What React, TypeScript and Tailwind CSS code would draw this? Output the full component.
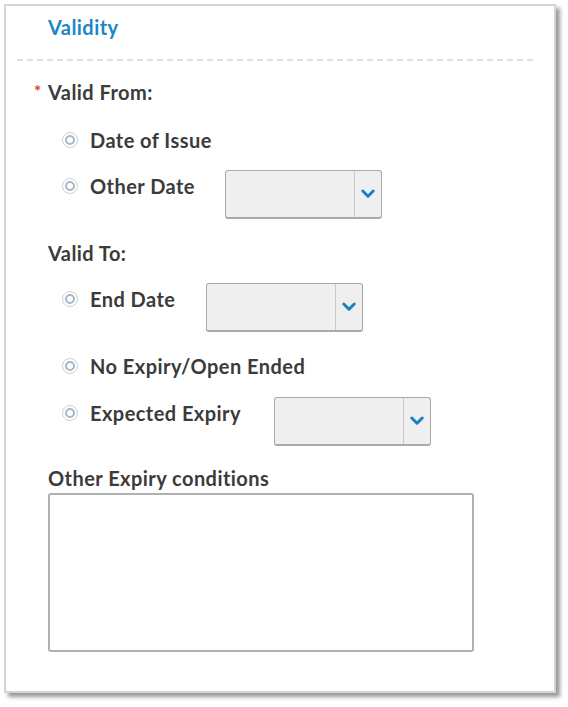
import React from "react";

const font = { fontFamily: "Lato, 'Open Sans', sans-serif" };

function Radio() {
  return (
    <span className="flex h-[16px] w-[16px] shrink-0 items-center justify-center rounded-full border border-[#cfcfcf] bg-white">
      <span className="h-[10px] w-[10px] rounded-full border-2 border-[#a3b9cb] bg-white" />
    </span>
  );
}

function Select() {
  return (
    <div className="flex h-[49px] w-[157px] rounded-[3px] border border-b-2 border-[#aaaaaa] bg-[#efefef]">
      <div className="flex-1" />
      <div className="flex w-[27px] items-center justify-center border-l border-[#c9c9c9]">
        <svg width="14" height="10" viewBox="0 0 14 10" fill="none">
          <path d="M1.8 2 7 7.2 12.2 2" stroke="#1a7fc1" strokeWidth="3" strokeLinecap="round" strokeLinejoin="round" />
        </svg>
      </div>
    </div>
  );
}

function RadioRow({ label, labelWidth, select }: { label: string; labelWidth?: string; select?: boolean }) {
  return (
    <div className="flex items-start">
      <div className={`ml-[56px] flex h-6 items-center ${select ? "mt-[4px]" : ""}`}>
        <Radio />
        <span className={`ml-[12px] ${labelWidth ?? ""}`}>{label}</span>
      </div>
      {select && <Select />}
    </div>
  );
}

export default function App() {
  return (
    <div className="min-h-[707px] w-[568px] bg-white pl-[4px] pt-[4px]" style={font}>
      <div className="flex h-[689px] w-[552px] flex-col border-2 border-[#d5d5d5] bg-white text-[20px] font-bold leading-6 tracking-[0.45px] text-[#3b3b3b] shadow-[4px_4px_4px_rgba(0,0,0,0.4)]">
        <h2 className="ml-[42px] mt-[9px] text-[20px] text-[#1b87c9]">Validity</h2>

        <div className="ml-[11px] mt-[20px] h-[2px] w-[519px] bg-[repeating-linear-gradient(90deg,#e0e0e0_0_6px,transparent_6px_10px)]" />

        <div className="ml-[28px] mt-[19px] flex h-6 items-center">
          <span className="w-[14px] text-[17px] text-[#e23b3b]">*</span>
          <span>Valid From:</span>
        </div>

        <div className="mt-[24px]">
          <RadioRow label="Date of Issue" />
        </div>
        <div className="mt-[18px]">
          <RadioRow label="Other Date" labelWidth="w-[135px]" select />
        </div>

        <div className="ml-[42px] mt-[22px] h-6">Valid To:</div>

        <div className="mt-[18px]">
          <RadioRow label="End Date" labelWidth="w-[116px]" select />
        </div>
        <div className="mt-[22px]">
          <RadioRow label="No Expiry/Open Ended" />
        </div>
        <div className="mt-[19px]">
          <RadioRow label="Expected Expiry" labelWidth="w-[184px]" select />
        </div>

        <div className="ml-[42px] mt-[20px] h-6">Other Expiry conditions</div>
        <div className="ml-[42px] mt-[3px] h-[159px] w-[426px] rounded-[3px] border-2 border-[#b0b0b0] bg-white" />
      </div>
    </div>
  );
}
